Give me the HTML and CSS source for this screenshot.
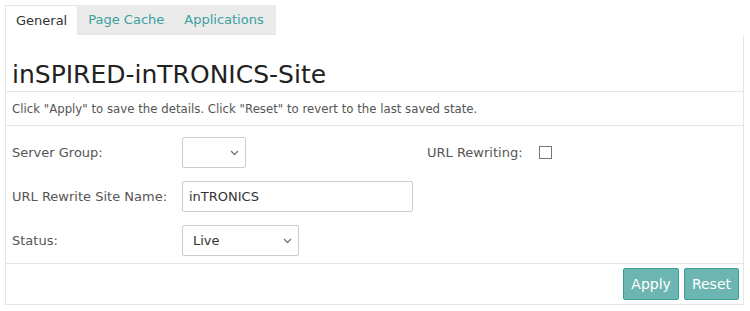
FILE: index.html
```html
<!DOCTYPE html>
<html lang="en">
<head>
  <meta charset="UTF-8" />
  <title>inSPIRED-inTRONICS-Site</title>
  <link rel="stylesheet" href="styles.css">
</head>
<body>
  <div class="site-editor">
    <ul class="tabs">
      <li class="tab active">General</li>
      <li class="tab">Page Cache</li>
      <li class="tab">Applications</li>
    </ul>

    <div class="panel">
      <h1 class="site-title">inSPIRED-inTRONICS-Site</h1>
      <p class="hint">Click "Apply" to save the details. Click "Reset" to revert to the last saved state.</p>

      <div class="form">
        <div class="form-row">
          <label class="field-label">Server Group:</label>
          <span class="select-wrap small">
            <select class="field-select"><option></option></select>
            <svg class="chevron" width="9" height="6" viewBox="0 0 9 6"><path d="M1 1l3.5 3.5L8 1" fill="none" stroke="#777" stroke-width="1.3"/></svg>
          </span>
          <label class="field-label side">URL Rewriting:</label>
          <input type="checkbox" class="field-check" />
        </div>
        <div class="form-row">
          <label class="field-label">URL Rewrite Site Name:</label>
          <input type="text" class="field-input" value="inTRONICS" />
        </div>
        <div class="form-row">
          <label class="field-label">Status:</label>
          <span class="select-wrap">
            <select class="field-select"><option>Live</option></select>
            <svg class="chevron" width="9" height="6" viewBox="0 0 9 6"><path d="M1 1l3.5 3.5L8 1" fill="none" stroke="#777" stroke-width="1.3"/></svg>
          </span>
        </div>
      </div>

      <div class="actions">
        <button class="btn">Apply</button>
        <button class="btn">Reset</button>
      </div>
    </div>
  </div>
</body>
</html>
```

FILE: styles.css
```css
*, *::before, *::after {
  box-sizing: border-box;
}

body {
  margin: 0;
  padding: 5px 6px 0 5px;
  font-family: "DejaVu Sans", sans-serif;
  font-size: 13px;
  color: #555;
  background: #fff;
}

.site-editor {
  width: 739px;
}

.tabs {
  display: flex;
  margin: 0;
  padding: 0;
  list-style: none;
  height: 30px;
}

.tab {
  padding: 0 10px;
  line-height: 29px;
  background: #ebebeb;
  color: #3aa0a0;
  border-bottom: 1px solid #e5e5e5;
}

.tab:last-child {
  padding-right: 12px;
}

.tab.active {
  background: #fff;
  color: #333;
  border: 1px solid #e5e5e5;
  border-bottom: none;
}

.panel {
  border: 1px solid #e5e5e5;
  border-top: none;
}

.site-title {
  margin: 0;
  padding: 24px 6px 0;
  height: 57px;
  font-size: 25px;
  font-weight: normal;
  color: #222;
  line-height: 32px;
  border-bottom: 1px solid #e5e5e5;
}

.hint {
  margin: 0;
  padding: 0 6px;
  height: 34px;
  line-height: 34px;
  font-size: 11.75px;
  border-bottom: 1px solid #e5e5e5;
}

.form {
  padding: 11px 6px 7px;
  border-bottom: 1px solid #e5e5e5;
}

.form-row {
  display: flex;
  align-items: center;
  margin-bottom: 13px;
}

.form-row:last-child {
  margin-bottom: 0;
}

.field-label {
  width: 170px;
  flex-shrink: 0;
}

.field-label.side {
  width: auto;
  margin-left: 181px;
  margin-right: 16px;
}

.select-wrap {
  position: relative;
  display: flex;
  width: 117px;
}

.select-wrap.small {
  width: 64px;
}

.field-select {
  appearance: none;
  width: 100%;
  height: 31px;
  border: 1px solid #ccc;
  border-radius: 2px;
  background: #fff;
  font-family: inherit;
  font-size: 13px;
  color: #333;
  padding: 0 10px;
}

.chevron {
  position: absolute;
  right: 7px;
  top: 13px;
  pointer-events: none;
}

.field-input {
  height: 31px;
  width: 231px;
  border: 1px solid #ccc;
  border-radius: 2px;
  font-family: inherit;
  font-size: 13px;
  color: #333;
  padding: 0 6px;
}

.field-check {
  appearance: none;
  margin: 0;
  width: 13px;
  height: 13px;
  border: 1px solid #767676;
  background: #fff;
}

.actions {
  display: flex;
  justify-content: flex-end;
  gap: 5px;
  padding: 4px 4px 4px;
}

.btn {
  height: 32px;
  padding: 0 7px;
  background: #6db5b0;
  color: #fff;
  border: 1px solid #3a9e96;
  border-radius: 2px;
  font-family: inherit;
  font-size: 14px;
}
```
